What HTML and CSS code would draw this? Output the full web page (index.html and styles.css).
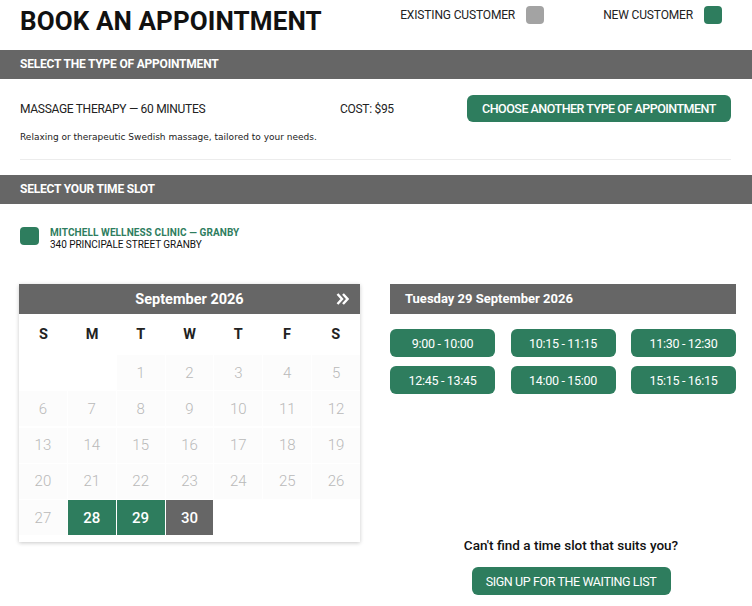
FILE: index.html
```html
<!DOCTYPE html>
<html lang="en">
<head>
<meta charset="utf-8">
<title>Book an appointment</title>
<link rel="stylesheet" href="styles.css">
</head>
<body>
<header class="top">
  <h1 class="title">BOOK AN APPOINTMENT</h1>
  <div class="legend">
    <div class="legend-item">EXISTING CUSTOMER <span class="swatch swatch-grey"></span></div>
    <div class="legend-item">NEW CUSTOMER <span class="swatch swatch-green"></span></div>
  </div>
</header>

<div class="bar">SELECT THE TYPE OF APPOINTMENT</div>
<section class="type">
  <div class="type-row">
    <div class="type-name">MASSAGE THERAPY — 60 MINUTES</div>
    <div class="type-cost">COST: $95</div>
    <button class="btn btn-choose">CHOOSE ANOTHER TYPE OF APPOINTMENT</button>
  </div>
  <p class="type-desc">Relaxing or therapeutic Swedish massage, tailored to your needs.</p>
  <hr class="sep">
</section>

<div class="bar">SELECT YOUR TIME SLOT</div>
<section class="location">
  <span class="swatch swatch-green loc-swatch"></span>
  <div class="loc-text">
    <div class="loc-name">MITCHELL WELLNESS CLINIC — GRANBY</div>
    <div class="loc-addr">340 PRINCIPALE STREET GRANBY</div>
  </div>
</section>

<section class="booking">
  <div class="calendar">
    <div class="cal-head">
      <span class="cal-month">September 2026</span>
      <svg class="cal-next" width="13" height="12" viewBox="0 0 13 12" aria-hidden="true">
        <path d="M1.5 1 L6 6 L1.5 11 M7 1 L11.5 6 L7 11" fill="none" stroke="#fff" stroke-width="2.4" stroke-linecap="butt" stroke-linejoin="miter"/>
      </svg>
    </div>
    <div class="cal-dow">
      <span>S</span><span>M</span><span>T</span><span>W</span><span>T</span><span>F</span><span>S</span>
    </div>
    <div class="cal-grid">
      <span class="day empty"></span><span class="day empty"></span>
      <span class="day">1</span><span class="day">2</span><span class="day">3</span><span class="day">4</span><span class="day">5</span>
      <span class="day">6</span><span class="day">7</span><span class="day">8</span><span class="day">9</span><span class="day">10</span><span class="day">11</span><span class="day">12</span>
      <span class="day">13</span><span class="day">14</span><span class="day">15</span><span class="day">16</span><span class="day">17</span><span class="day">18</span><span class="day">19</span>
      <span class="day">20</span><span class="day">21</span><span class="day">22</span><span class="day">23</span><span class="day">24</span><span class="day">25</span><span class="day">26</span>
      <span class="day">27</span><span class="day avail">28</span><span class="day avail">29</span><span class="day selected">30</span>
      <span class="day empty"></span><span class="day empty"></span><span class="day empty"></span>
    </div>
  </div>

  <div class="slots-col">
    <div class="slots-head">Tuesday 29 September 2026</div>
    <div class="slots">
      <button class="btn slot">9:00 - 10:00</button>
      <button class="btn slot">10:15 - 11:15</button>
      <button class="btn slot">11:30 - 12:30</button>
      <button class="btn slot">12:45 - 13:45</button>
      <button class="btn slot">14:00 - 15:00</button>
      <button class="btn slot">15:15 - 16:15</button>
    </div>
    <div class="waiting">
      <p class="waiting-q">Can't find a time slot that suits you?</p>
      <button class="btn btn-wait">SIGN UP FOR THE WAITING LIST</button>
    </div>
  </div>
</section>
</body>
</html>
```

FILE: styles.css
```css
* { box-sizing: border-box; }

body {
  margin: 0;
  font-family: Roboto, "Liberation Sans", Arial, sans-serif;
  color: #222;
  background: #fff;
}

.top {
  display: flex;
  align-items: flex-start;
  height: 50px;
  padding: 0 30px 0 20px;
}

.title {
  margin: 6px 0 0;
  font-size: 26px;
  line-height: 30px;
  font-weight: 700;
  color: #111;
  letter-spacing: 0.1px;
}

.legend {
  margin-left: auto;
  display: flex;
  gap: 59px;
  margin-top: 6px;
}

.legend-item {
  display: flex;
  align-items: center;
  gap: 11px;
  font-size: 12px;
  line-height: 18px;
  letter-spacing: -0.15px;
  color: #222;
}

.swatch {
  display: inline-block;
  width: 18px;
  height: 18px;
  border-radius: 4px;
}
.swatch-grey { background: #a3a3a3; }
.swatch-green { background: #2e7d5e; }

.bar {
  height: 29px;
  line-height: 29px;
  padding-left: 20px;
  background: #666;
  color: #fff;
  font-size: 12px;
  font-weight: 700;
  letter-spacing: -0.2px;
}

.type {
  padding: 16px 21px 15px 20px;
}

.type-row {
  display: flex;
  align-items: center;
  height: 27px;
}

.type-name {
  width: 320px;
  font-size: 12px;
  letter-spacing: -0.3px;
}

.type-cost {
  flex: 1;
  font-size: 12px;
  letter-spacing: -0.3px;
}

.btn {
  border: 0;
  background: #2e7d5e;
  color: #fff;
  font-family: inherit;
  border-radius: 6px;
  cursor: pointer;
  white-space: nowrap;
  padding: 0;
}

.btn-choose {
  height: 27px;
  width: 264px;
  font-size: 12.5px;
  font-weight: 500;
  letter-spacing: -0.5px;
}

.type-desc {
  margin: 9px 0 0;
  font-family: "DejaVu Sans", Verdana, sans-serif;
  font-size: 9px;
  line-height: 12px;
  color: #222;
}

.sep {
  margin: 16px 0 0;
  border: 0;
  border-top: 1px solid #ececec;
}

.location {
  display: flex;
  align-items: flex-start;
  gap: 11px;
  padding: 23px 20px 0;
}

.loc-swatch {
  width: 19px;
  height: 18px;
}

.loc-text {
  font-size: 10px;
  line-height: 12px;
}

.loc-name {
  color: #2e7d5e;
  font-weight: 700;
  letter-spacing: 0.1px;
}

.loc-addr {
  color: #111;
  letter-spacing: -0.05px;
}

.booking {
  display: flex;
  align-items: flex-start;
  gap: 30px;
  padding: 0 0 0 19px;
  margin-top: 33px;
}

.calendar {
  width: 341px;
  flex: none;
  background: #fff;
  box-shadow: 0 1px 4px rgba(0, 0, 0, 0.22);
  padding-bottom: 7px;
}

.cal-head {
  position: relative;
  height: 30px;
  background: #666;
  color: #fff;
  display: flex;
  align-items: center;
  justify-content: center;
}

.cal-month {
  font-size: 14.5px;
  font-weight: 700;
  letter-spacing: 0;
}

.cal-next {
  position: absolute;
  right: 11px;
  top: 9px;
}

.cal-dow {
  display: grid;
  grid-template-columns: repeat(7, 1fr);
  height: 40px;
  align-items: center;
  text-align: center;
  font-size: 14.5px;
  font-weight: 700;
  color: #222;
}

.cal-grid {
  display: grid;
  grid-template-columns: repeat(7, 1fr);
  grid-auto-rows: 35px;
  gap: 1.25px 1px;
  padding: 1px 0 0;
}

.day {
  display: flex;
  align-items: center;
  justify-content: center;
  font-size: 15px;
  font-weight: 300;
  color: #b9b9b9;
  background: #fcfcfc;
}

.day.empty { background: transparent; }

.day.avail {
  background: #2e7d5e;
  color: #fff;
  font-weight: 500;
}

.day.selected {
  background: #666;
  color: #fff;
  font-weight: 500;
}

.slots-col {
  width: 362px;
  flex: none;
}

.slots-head {
  width: 346px;
  height: 30px;
  line-height: 30px;
  padding-left: 15px;
  background: #666;
  color: #fff;
  font-size: 13px;
  font-weight: 700;
  letter-spacing: 0;
}

.slots {
  width: 346px;
  display: grid;
  grid-template-columns: repeat(3, 105px);
  justify-content: space-between;
  gap: 9px 15px;
  margin-top: 15px;
}

.slot {
  height: 28px;
  font-size: 12.5px;
  letter-spacing: -0.3px;
}

.waiting {
  margin-top: 143px;
  text-align: center;
}

.waiting-q {
  margin: 0;
  font-size: 13.5px;
  line-height: 16px;
  font-weight: 500;
  color: #111;
  letter-spacing: 0;
}

.btn-wait {
  margin-top: 14px;
  height: 28px;
  width: 199px;
  font-size: 12.5px;
  letter-spacing: -0.4px;
}
```
